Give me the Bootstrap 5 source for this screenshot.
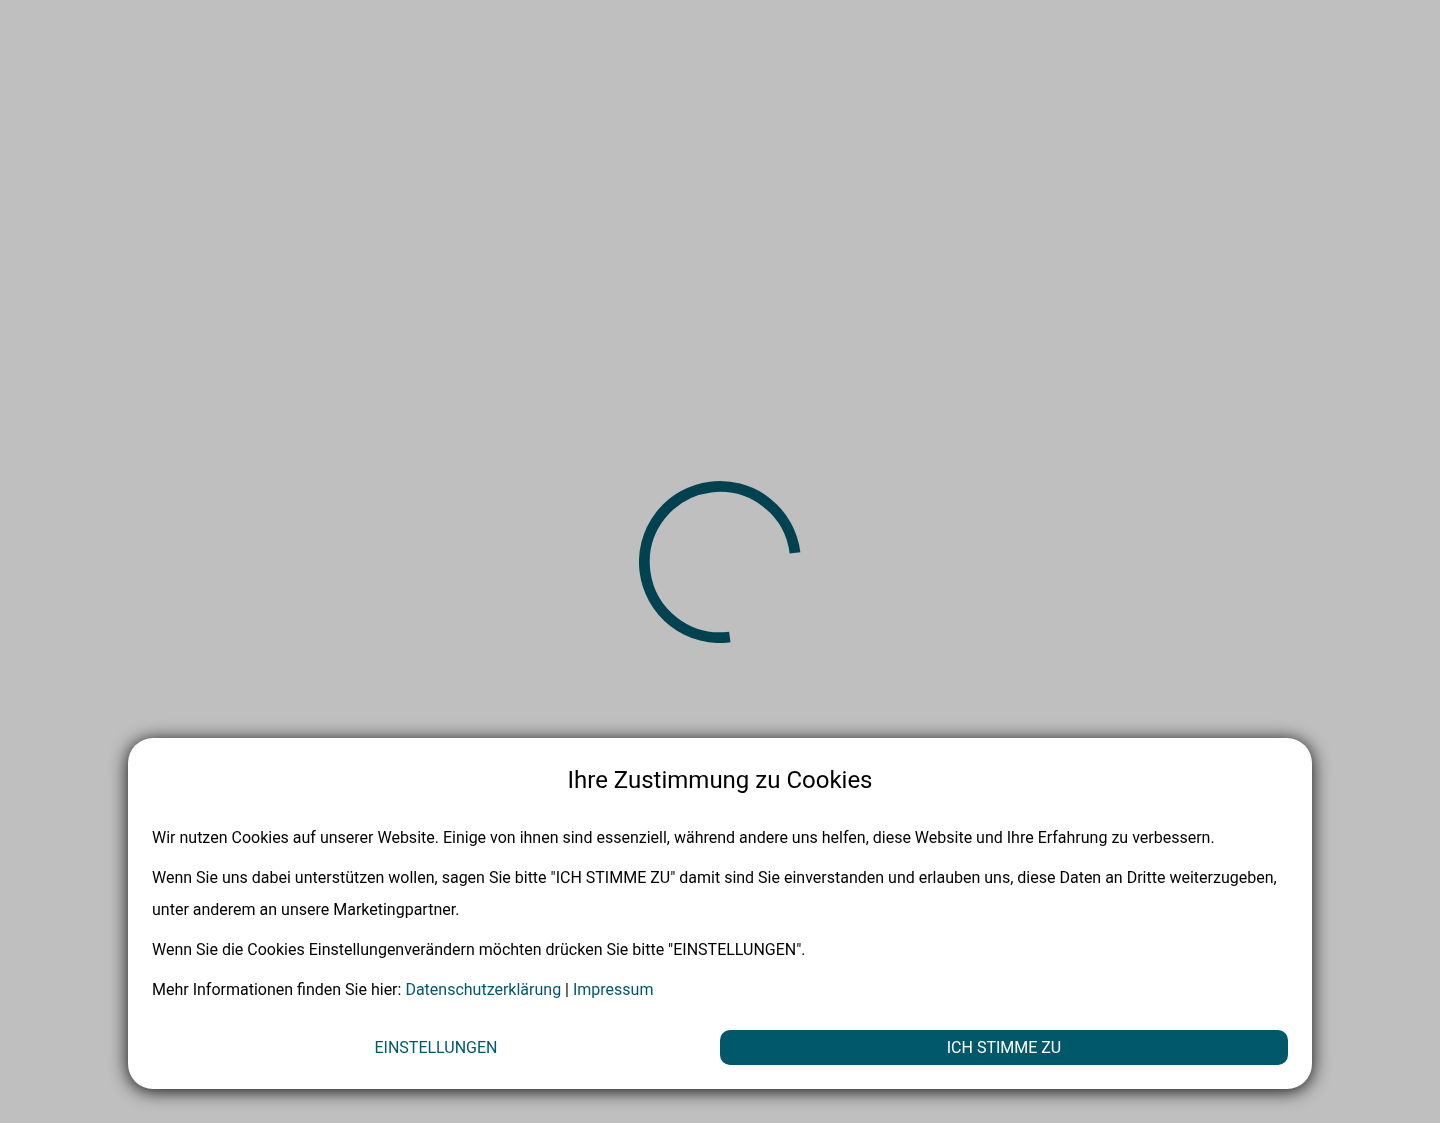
<!DOCTYPE html>
<html lang="de">
<head>
<meta charset="utf-8">
<meta name="viewport" content="width=device-width, initial-scale=1">
<title>Ihre Zustimmung zu Cookies</title>
<link rel="stylesheet" href="https://cdn.jsdelivr.net/npm/bootstrap@5.3.0/dist/css/bootstrap.min.css">
<style>
  body {
    --brand: #00586a;
    background: #bfbfbf;
    color: #000;
    font-family: Roboto, "Liberation Sans", sans-serif;
    font-size: 16px;
    line-height: 32px;
  }
  .consent-wrap { padding: 0 128px 34px; }
  .consent {
    border-radius: 25px;
    box-shadow: 0 2px 18px rgba(0, 0, 0, .95);
  }
  .consent h1 { font-size: 24px; line-height: 36px; font-weight: 400; }
  .consent a { color: var(--brand); }
  .consent .btn {
    --bs-btn-line-height: 25px;
    --bs-btn-padding-y: 5px;
    --bs-btn-border-width: 0;
    --bs-btn-border-radius: 10px;
    --bs-btn-color: var(--brand);
    --bs-btn-hover-color: var(--brand);
  }
  .consent .btn-accept {
    --bs-btn-bg: var(--brand);
    --bs-btn-color: #fff;
    --bs-btn-hover-bg: #00424f;
    --bs-btn-hover-color: #fff;
  }
  @media (max-width: 991px) { .consent-wrap { padding: 0 16px 16px; } }
</style>
<script src="https://cdn.jsdelivr.net/npm/bootstrap@5.3.0/dist/js/bootstrap.bundle.min.js" defer></script>
</head>
<body>
<main class="vh-100 d-flex align-items-center justify-content-center" role="status" aria-label="Seite wird geladen">
  <svg width="162" height="162" viewBox="-81 -81 162 162" fill="none" stroke="#004250" stroke-width="10.8" aria-hidden="true">
    <path d="M9.8 75A75.6 75.6 0 1 1 75 -9.2"/>
  </svg>
</main>
<div class="consent-wrap fixed-bottom">
  <section class="consent bg-white p-4" role="dialog" aria-labelledby="consent-title">
    <h1 id="consent-title" class="text-center mb-4">Ihre Zustimmung zu Cookies</h1>
    <p class="mb-2">Wir nutzen Cookies auf unserer Website. Einige von ihnen sind essenziell, während andere uns helfen, diese Website und Ihre Erfahrung zu verbessern.</p>
    <p class="mb-2">Wenn Sie uns dabei unterstützen wollen, sagen Sie bitte "ICH STIMME ZU" damit sind Sie einverstanden und erlauben uns, diese Daten an Dritte weiterzugeben, unter anderem an unsere Marketingpartner.</p>
    <p class="mb-2">Wenn Sie die Cookies Einstellungenverändern möchten drücken Sie bitte "EINSTELLUNGEN".</p>
    <p class="mb-4">Mehr Informationen finden Sie hier: <a class="text-decoration-none" href="#datenschutz">Datenschutzerklärung</a> | <a class="text-decoration-none" href="#impressum">Impressum</a></p>
    <div class="row g-0">
      <div class="col-6 d-grid"><button type="button" class="btn">EINSTELLUNGEN</button></div>
      <div class="col-6 d-grid"><button type="button" class="btn btn-accept">ICH STIMME ZU</button></div>
    </div>
  </section>
</div>
</body>
</html>
